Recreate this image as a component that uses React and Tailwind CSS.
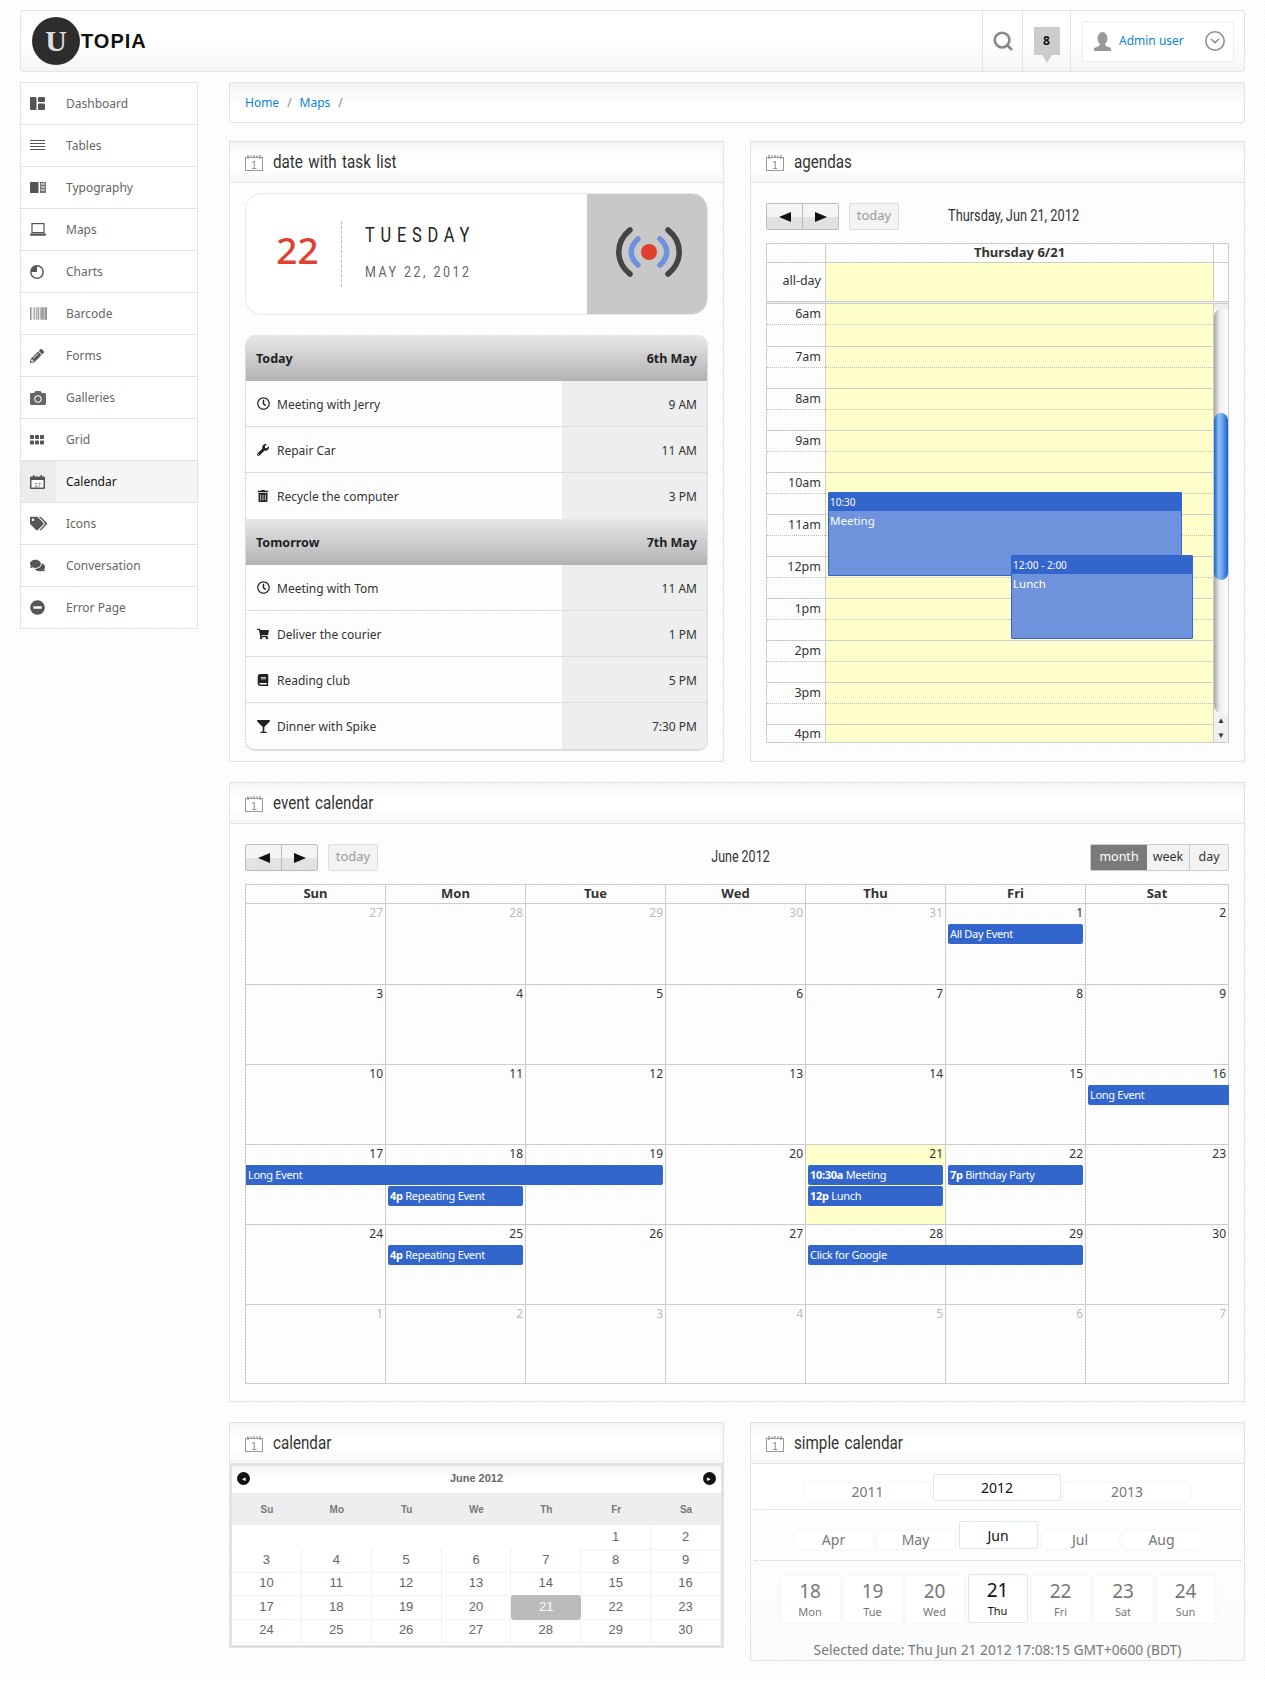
import React from 'react';
import { FaBarcode, FaPencilAlt, FaCamera, FaTags, FaComments, FaMinusCircle, FaRegClock, FaWrench, FaTrashAlt, FaShoppingCart, FaBook, FaGlassMartini } from 'react-icons/fa';
import { Search, CircleChevronDown } from 'lucide-react';

const DashIcon = () => (<svg width="15" height="13" viewBox="0 0 15 13" fill="#555"><rect x="0" y="0" width="6.5" height="13" rx="1"/><rect x="8" y="0" width="7" height="5" rx="1"/><rect x="8" y="6.5" width="7" height="6.5" rx="1"/></svg>);
const LinesIcon = () => (<svg width="15" height="11" viewBox="0 0 15 11" stroke="#555" strokeWidth="1"><path d="M0 .5h15M0 3.5h15M0 6.5h15M0 9.5h15"/></svg>);
const TypoIcon = () => (<svg width="16" height="11" viewBox="0 0 16 11" fill="#555"><rect x="0" y="0" width="8.5" height="11"/><path d="M10 0h6v11h-6z" fill="#777"/><path d="M11 2h4M11 5h4M11 8h4" stroke="#fff" strokeWidth="1"/></svg>);
const LaptopIcon = () => (<svg width="16" height="13" viewBox="0 0 16 13"><rect x="2" y=".6" width="12" height="9" fill="none" stroke="#555" strokeWidth="1.2"/><path d="M0 10.5h16v1.2a1 1 0 0 1-1 1H1a1 1 0 0 1-1-1z" fill="#555"/></svg>);
const PieIcon = () => (<svg width="14" height="14" viewBox="0 0 14 14"><circle cx="7" cy="7" r="6.2" fill="none" stroke="#555" strokeWidth="1.4"/><path d="M7 7V.8A6.2 6.2 0 0 0 .8 7z" fill="#555"/></svg>);
const GridIcon = () => (<svg width="14" height="10" viewBox="0 0 14 10" fill="#555"><rect x="0" y="0" width="4" height="4" rx=".8"/><rect x="5" y="0" width="4" height="4" rx=".8"/><rect x="10" y="0" width="4" height="4" rx=".8"/><rect x="0" y="5.5" width="4" height="4" rx=".8"/><rect x="5" y="5.5" width="4" height="4" rx=".8"/><rect x="10" y="5.5" width="4" height="4" rx=".8"/></svg>);
const CalIcon17 = () => (<svg width="15" height="14" viewBox="0 0 15 14"><rect x="0" y="1.5" width="15" height="12.5" rx="1" fill="#555"/><rect x="1.5" y="5" width="12" height="7.5" fill="#fff"/><rect x="3" y="0" width="1.5" height="3" fill="#555"/><rect x="10.5" y="0" width="1.5" height="3" fill="#555"/><text x="7.5" y="11.5" fontSize="6" textAnchor="middle" fill="#555" fontFamily="Liberation Sans">17</text></svg>);
const UserIcon = () => (<svg width="19" height="19" viewBox="0 0 19 19" fill="#999"><ellipse cx="9.5" cy="6.5" rx="5" ry="6.5"/><path d="M7 12h5l1 2 5 2v3H1v-3l5-2z"/></svg>);

const nav = [
  ['Dashboard', <DashIcon />], ['Tables', <LinesIcon />], ['Typography', <TypoIcon />],
  ['Maps', <LaptopIcon />], ['Charts', <PieIcon />], ['Barcode', <FaBarcode size={17} color="#666" />],
  ['Forms', <FaPencilAlt size={14} color="#555" />], ['Galleries', <FaCamera size={16} color="#666" />], ['Grid', <GridIcon />],
  ['Calendar', <CalIcon17 />, true], ['Icons', <FaTags size={17} color="#555" />], ['Conversation', <FaComments size={15} color="#555" />], ['Error Page', <FaMinusCircle size={15} color="#555" />],
];

const WidgetIcon = () => (
  <svg width="18" height="17" viewBox="0 0 18 17" className="shrink-0">
    <rect x="0.5" y="3.5" width="17" height="13" fill="#fff" stroke="#999" />
    <path d="M3 1v4M6 1.5v2M9 1v2.5M12 1.5v2M15 1v4" stroke="#999" strokeWidth="1.4" />
    <text x="9" y="15" fontSize="10" textAnchor="middle" fill="#888" fontFamily="Liberation Sans">1</text>
  </svg>
);

const Widget = ({ title, className = '', children }) => (
  <section className={`border border-[#e2e2e2] ${className}`}>
    <div className="flex h-[41px] items-center gap-[10px] border-b border-[#e2e2e2] bg-[linear-gradient(180deg,#f4f4f4,#ffffff_35%,#ffffff_65%,#f6f6f6)] pl-[15px]">
      <WidgetIcon />
      <h2 className="-mt-[2px] inline-block origin-left scale-x-[0.8] whitespace-nowrap font-['Roboto',sans-serif] text-[19px] leading-none text-[#333] [word-spacing:2px]">{title}</h2>
    </div>
    {children}
  </section>
);

const tasks = [
  { head: ['Today', '6th May'], rows: [[<FaRegClock size={13} />, 'Meeting with Jerry', '9 AM'], [<FaWrench size={12} />, 'Repair Car', '11 AM'], [<FaTrashAlt size={12} />, 'Recycle the computer', '3 PM']] },
  { head: ['Tomorrow', '7th May'], rows: [[<FaRegClock size={13} />, 'Meeting with Tom', '11 AM'], [<FaShoppingCart size={12} />, 'Deliver the courier', '1 PM'], [<FaBook size={12} />, 'Reading club', '5 PM'], [<FaGlassMartini size={13} />, 'Dinner with Spike', '7:30 PM']] },
];

const Triangle = ({ dir }) => (
  <svg width="12" height="10" viewBox="0 0 12 10" fill="#111">{dir === 'l' ? <path d="M0 5 12 0v10z" /> : <path d="M12 5 0 0v10z" />}</svg>
);

const NavButtons = () => (
  <div className="flex items-center">
    <div className="flex h-[27px] w-[73px] overflow-hidden rounded-[2px] border border-[#bbb] bg-[linear-gradient(180deg,#f5f5f5_50%,#e2e2e2_50%)]">
      <div className="flex flex-1 items-center justify-center border-r border-[#bbb]"><Triangle dir="l" /></div>
      <div className="flex flex-1 items-center justify-center"><Triangle dir="r" /></div>
    </div>
    <div className="ml-[10px] flex h-[27px] w-[50px] items-center justify-center rounded-[2px] border border-[#ddd] bg-[#f3f3f3] pb-[2px] text-[13px] text-[#999]">today</div>
  </div>
);

const hours = ['6am', '7am', '8am', '9am', '10am', '11am', '12pm', '1pm', '2pm', '3pm'];

const Agenda = () => (
  <div className="px-[15px] pb-[15px] pt-[20px]">
    <div className="relative flex items-center">
      <NavButtons />
      <div className="-mt-[2px] ml-[49px] inline-block origin-left scale-x-[0.8] whitespace-nowrap font-['Roboto',sans-serif] text-[16px] text-[#333]">Thursday, Jun 21, 2012</div>
    </div>
    <div className="mt-[13px] border border-[#ccc] text-[#333]">
      <div className="grid h-[19px] grid-cols-[58px_1fr_14px] border-b border-[#ccc]">
        <div />
        <div className="border-l border-r border-[#ccc] text-center text-[13px] font-bold leading-[17px]">Thursday 6/21</div>
        <div />
      </div>
      <div className="grid h-[38px] grid-cols-[58px_1fr_14px]">
        <div className="pr-[4px] text-right text-[12.5px] leading-[36px]">all-day</div>
        <div className="border-l border-r border-[#ccc] bg-[#ffffcc]" />
        <div />
      </div>
      <div className="h-[3px] border-b border-t border-[#ccc] bg-[#eee]" />
      <div className="relative flex h-[438px] overflow-hidden">
        <div className="flex-1">
          {hours.map((h, i) => (
            <div key={h} className={`grid h-[42px] grid-cols-[58px_1fr] ${i ? 'border-t border-[#ccc]' : ''}`}>
              <div className="flex flex-col">
                <div className="h-[21px] border-b border-dotted border-[#bbb] pr-[4px] text-right text-[12.5px] leading-[19px]">{h}</div>
              </div>
              <div className="border-l border-r border-[#ccc] bg-[#ffffcc]">
                <div className="h-[21px] border-b border-dotted border-[#bbb]" />
              </div>
            </div>
          ))}
          <div className="grid h-[18px] grid-cols-[58px_1fr] border-t border-[#ccc]">
            <div className="pr-[4px] text-right text-[12.5px] leading-[17px]">4pm</div>
            <div className="border-l border-r border-[#ccc] bg-[#ffffcc]" />
          </div>
        </div>
        <div className="relative flex w-[14px] flex-col">
          <div className="h-[5px] bg-[#eee]" />
          <div className="flex-1 rounded-[7px] bg-[linear-gradient(90deg,#a8a8a8,#eeeeee_40%,#ffffff)]" />
          <div className="flex h-[29px] flex-col items-center justify-around bg-[#f0f0f0] text-[8px] leading-none text-[#333]">
            <span>▲</span><span>▼</span>
          </div>
          <div className="absolute left-0 top-[109px] h-[167px] w-[14px] rounded-[7px] bg-[linear-gradient(90deg,#1f5ec8,#8fc0f5_35%,#5b9bea_65%,#1f5ec8)]" />
        </div>
        <div className="absolute left-[61px] top-[188px] h-[84px] w-[354px] rounded-[1px] border border-[#3366cc] bg-[#6e92db] text-[11.5px] text-white">
          <div className="h-[18px] bg-[#3366cc] pl-[1px] text-[10px] leading-[18px]">10:30</div>
          <div className="pl-[1px] leading-[19px]">Meeting</div>
        </div>
        <div className="absolute left-[244px] top-[251px] h-[84px] w-[182px] rounded-[1px] border border-[#3366cc] bg-[#6e92db] text-[11.5px] text-white">
          <div className="h-[18px] bg-[#3366cc] pl-[1px] text-[10px] leading-[18px]">12:00 - 2:00</div>
          <div className="pl-[1px] leading-[19px]">Lunch</div>
        </div>
      </div>
    </div>
  </div>
);

const weeks = [
  [[27, 1], [28, 1], [29, 1], [30, 1], [31, 1], [1], [2]],
  [[3], [4], [5], [6], [7], [8], [9]],
  [[10], [11], [12], [13], [14], [15], [16]],
  [[17], [18], [19], [20], [21, 0, 1], [22], [23]],
  [[24], [25], [26], [27], [28], [29], [30]],
  [[1, 1], [2, 1], [3, 1], [4, 1], [5, 1], [6, 1], [7, 1]],
];

const weekHeights = ['h-[81px]', 'h-[80px]', 'h-[80px]', 'h-[80px]', 'h-[80px]', 'h-[78px]'];

const Ev = ({ className, t, children }) => (
  <div className={`absolute h-[20px] rounded-[2px] bg-[#3366cc] pl-[2px] text-[11px] leading-[19px] tracking-[-0.3px] text-white ${className}`}>
    {t && <b>{t} </b>}{children}
  </div>
);

const weekEvents = [
  <Ev key="a" className="left-[702px] top-[20px] w-[135px]">All Day Event</Ev>,
  null,
  <Ev key="b" className="left-[842px] top-[20px] w-[141px] rounded-r-none">Long Event</Ev>,
  <React.Fragment key="c">
    <Ev className="left-0 top-[20px] w-[417px] rounded-l-none">Long Event</Ev>
    <Ev className="left-[142px] top-[41px] w-[135px]" t="4p">Repeating Event</Ev>
    <Ev className="left-[562px] top-[20px] w-[135px]" t="10:30a">Meeting</Ev>
    <Ev className="left-[562px] top-[41px] w-[135px]" t="12p">Lunch</Ev>
    <Ev className="left-[702px] top-[20px] w-[135px]" t="7p">Birthday Party</Ev>
  </React.Fragment>,
  <React.Fragment key="d">
    <Ev className="left-[142px] top-[20px] w-[135px]" t="4p">Repeating Event</Ev>
    <Ev className="left-[562px] top-[20px] w-[275px]">Click for Google</Ev>
  </React.Fragment>,
  null,
];

const MonthCal = () => (
  <div className="px-[15px] pb-[17px] pt-[20px]">
    <div className="relative flex items-center justify-between">
      <NavButtons />
      <div className="-mt-[2px] ml-[12px] inline-block scale-x-[0.78] whitespace-nowrap font-['Roboto',sans-serif] text-[16px] text-[#333]">June 2012</div>
      <div className="flex h-[27px] overflow-hidden rounded-[2px] border border-[#ccc] text-[12.5px]">
        <div className="flex w-[56px] items-center justify-center bg-[#7a7a7a] text-white">month</div>
        <div className="flex w-[43px] items-center justify-center border-r border-[#ccc] bg-[#f3f3f3] text-[#333]">week</div>
        <div className="flex w-[38px] items-center justify-center bg-[#f3f3f3] text-[#333]">day</div>
      </div>
    </div>
    <div className="mt-[13px] border border-[#ccc] text-[#333]">
      <div className="grid h-[19px] grid-cols-[140px_140px_140px_140px_140px_140px_1fr] border-b border-[#ccc] text-center text-[13px] font-bold leading-[17px]">
        {['Sun', 'Mon', 'Tue', 'Wed', 'Thu', 'Fri', 'Sat'].map((d, i) => (
          <div key={d} className={i < 6 ? 'border-r border-[#ccc]' : ''}>{d}</div>
        ))}
      </div>
      {weeks.map((w, wi) => (
        <div key={wi} className={`relative grid grid-cols-[140px_140px_140px_140px_140px_140px_1fr] ${weekHeights[wi]} ${wi < 5 ? 'border-b border-[#ccc]' : ''}`}>
          {w.map(([n, other, today], i) => (
            <div key={i} className={`pr-[2px] text-right text-[12px] leading-[18px] ${i < 6 ? 'border-r border-[#ccc]' : ''} ${other ? 'text-[#bbb]' : ''} ${today ? 'bg-[#ffffcc]' : ''}`}>{n}</div>
          ))}
          {weekEvents[wi]}
        </div>
      ))}
    </div>
  </div>
);

const dpRows = [
  ['', '', '', '', '', 1, 2], [3, 4, 5, 6, 7, 8, 9], [10, 11, 12, 13, 14, 15, 16], [17, 18, 19, 20, 21, 22, 23], [24, 25, 26, 27, 28, 29, 30],
];
const dpHeights = ['h-[23px]', 'h-[23px]', 'h-[24px]', 'h-[23px]', 'h-[23px]'];

const DatePicker = () => (
  <div className="border-2 border-[#e2e2e2] bg-white pb-[4px] font-['Liberation_Sans',sans-serif] text-[#666]">
    <div className="flex h-[27px] items-center justify-between bg-[linear-gradient(180deg,#f6f6f6,#ffffff_50%)] px-[5px] pb-[3px]">
      <span className="flex h-[13px] w-[13px] items-center justify-center rounded-full bg-[#111] text-[7px] leading-none text-white">◂</span>
      <span className="text-[11px] font-bold">June 2012</span>
      <span className="flex h-[13px] w-[13px] items-center justify-center rounded-full bg-[#111] text-[7px] leading-none text-white">▸</span>
    </div>
    <div className="grid h-[32px] grid-cols-7 items-center bg-[#eeeeee] text-center text-[10px] font-bold text-[#777]">
      {['Su', 'Mo', 'Tu', 'We', 'Th', 'Fr', 'Sa'].map(d => <div key={d}>{d}</div>)}
    </div>
    {dpRows.map((r, ri) => (
      <div key={ri} className={`grid grid-cols-7 text-center text-[13px] leading-[24px] ${dpHeights[ri]}`}>
        {r.map((n, i) => (
          <div key={i} className={n === '' ? '' : n === 21 ? 'rounded-[3px] bg-[#bbbbbb] text-white' : 'border-b border-r border-[#f1f1f1]'}>{n}</div>
        ))}
      </div>
    ))}
  </div>
);

const Pill = ({ active, className = '', children }) => (
  <div className={`flex items-center justify-center bg-white ${active ? 'border border-[#dde6f0] text-[#111]' : 'text-[#777] shadow-[0_0_3px_#eeeeee]'} ${className}`}>{children}</div>
);

const days = [[18, 'Mon', 'w-[59px]'], [19, 'Tue', 'w-[58px]'], [20, 'Wed', 'w-[58px]'], [21, 'Thu', 'w-[60px]', 1], [22, 'Fri', 'w-[58px]'], [23, 'Sat', 'w-[59px]'], [24, 'Sun', 'w-[58px]']];

const SimpleCal = () => (
  <div className="bg-[linear-gradient(180deg,#ffffff,#fafbfc)] text-center">
    <div className="mx-[3px] flex h-[46px] items-start justify-center gap-[3px] border-b border-dotted border-[#cccccc] pt-[10px] text-[14px]">
      <Pill className="mt-[9px] h-[18px] w-[125px] pb-[2px]">2011</Pill>
      <Pill active className="h-[27px] w-[128px] rounded-[2px]">2012</Pill>
      <Pill className="mt-[9px] h-[18px] w-[126px] pb-[2px]">2013</Pill>
    </div>
    <div className="mx-[3px] flex h-[51px] items-start justify-center gap-[4px] border-b border-dotted border-[#cccccc] pt-[11px] text-[14px]">
      <Pill className="mt-[10px] h-[18px] w-[78px] pb-[2px]">Apr</Pill>
      <Pill className="mt-[10px] h-[18px] w-[78px] pb-[2px]">May</Pill>
      <Pill active className="h-[28px] w-[79px] rounded-[2px]">Jun</Pill>
      <Pill className="mt-[10px] h-[18px] w-[77px] pb-[2px]">Jul</Pill>
      <Pill className="mt-[10px] h-[18px] w-[78px] pb-[2px]">Aug</Pill>
    </div>
    <div className="flex h-[79px] items-start justify-center gap-[4px] pt-[15px]">
      {days.map(([n, d, w, a]) => (
        <Pill key={n} active={a} className={`${w} ${a ? '-mt-[2px] h-[49px] rounded-[2px]' : 'h-[47px]'} flex-col`}>
          <span className="text-[19px] leading-[23px]">{n}</span>
          <span className="text-[11px] leading-[17px]">{d}</span>
        </Pill>
      ))}
    </div>
    <div className="h-[20px] text-[13.8px] leading-[20px] text-[#777]">Selected date: Thu Jun 21 2012 17:08:15 GMT+0600 (BDT)</div>
  </div>
);

export default function App() {
  return (
    <div className="min-h-[1681px] bg-white bg-[radial-gradient(#f3f3f3_0.7px,transparent_0.7px)] bg-[length:3px_3px] px-[20px] pt-[10px] font-['Noto_Sans',sans-serif] text-[#333]">
      <header className="flex h-[62px] items-stretch justify-between rounded-[3px] border border-[#e2e2e2] bg-[linear-gradient(180deg,#ffffff_50%,#f5f5f5)]">
        <div className="flex items-center pl-[11px]">
          <div className="flex h-[48px] w-[48px] items-center justify-center rounded-full bg-[#2d2d2d] font-['Liberation_Serif',serif] text-[30px] font-bold leading-none text-[#dddddd]">U</div>
          <span className="ml-[1px] font-['Liberation_Sans',sans-serif] text-[20px] font-bold tracking-[1px] text-[#111]">TOPIA</span>
        </div>
        <div className="flex">
          <div className="flex w-[40px] items-center justify-center border-l border-[#e2e2e2]"><Search size={22} color="#888" strokeWidth={2.8} /></div>
          <div className="flex w-[48px] items-center justify-center border-l border-[#e2e2e2]">
            <div className="relative flex h-[28px] w-[26px] items-center justify-center bg-[#cccccc] text-[12px] font-bold text-[#111]">8
              <span className="absolute -bottom-[8px] left-[8px] h-0 w-0 border-l-[5px] border-r-[5px] border-t-[8px] border-l-transparent border-r-transparent border-t-[#cccccc]" />
            </div>
          </div>
          <div className="flex w-[174px] items-center border-l border-[#e2e2e2] pl-[11px]">
            <div className="flex h-[41px] w-[152px] items-center rounded-[2px] border border-[#eeeeee] bg-white pl-[10px]">
              <UserIcon />
              <span className="ml-[7px] text-[12px] text-[#0a84d6]">Admin user</span>
              <CircleChevronDown size={22} color="#888" strokeWidth={1.6} className="ml-[20px]" />
            </div>
          </div>
        </div>
      </header>
      <div className="mt-[10px] flex gap-[31px]">
        <nav className="w-[178px] self-start border border-b-0 border-[#e2e2e2] bg-white">
          {nav.map(([label, icon, active]) => (
            <div key={label} className={`flex h-[42px] items-center border-b border-[#e2e2e2] ${active ? 'bg-[#f5f5f5]' : ''}`}>
              <div className={`flex h-full w-[35px] items-center pl-[9px] ${active ? 'bg-[#ececec]' : ''}`}>{icon}</div>
              <span className={`ml-[10px] text-[12px] ${active ? 'text-[#111]' : 'text-[#666]'}`}>{label}</span>
            </div>
          ))}
        </nav>
        <main className="w-[1016px]">
          <div className="flex h-[41px] items-center gap-[8px] rounded-[3px] border border-[#e2e2e2] bg-[linear-gradient(180deg,#f4f4f4,#ffffff_60%)] pl-[15px] text-[12px] text-[#888]">
            <span className="text-[#0a84d6]">Home</span><span>/</span><span className="text-[#0a84d6]">Maps</span><span>/</span>
          </div>
          <div className="mt-[18px] grid grid-cols-[495px_495px] gap-[26px]">
            <Widget title="date with task list">
              <div className="px-[15px] pb-[10px] pt-[10px]">
                <div className="flex h-[122px] overflow-hidden rounded-[16px] border border-[#e8e8e8] bg-white">
                  <div className="flex w-[95px] items-center justify-center pb-[9px] pl-[8px] text-[37px] font-medium leading-none text-[#e04030]">22</div>
                  <div className="my-[27px] border-l border-dashed border-[#bbb]" />
                  <div className="flex-1 pl-[23px] pt-[29px]">
                    <div className="origin-left scale-x-[0.82] whitespace-nowrap font-['Roboto',sans-serif] text-[20px] leading-[24px] tracking-[7px] text-[#222]">TUESDAY</div>
                    <div className="mt-[15px] origin-left scale-x-[0.83] whitespace-nowrap font-['Roboto',sans-serif] text-[15px] leading-[20px] tracking-[3px] text-[#666]">MAY 22, 2012</div>
                  </div>
                  <div className="flex w-[120px] items-center justify-center bg-[#c8c8c8] pb-[5px] pl-[3px]">
                    <svg width="66" height="50" viewBox="0 0 66 50" fill="none" strokeLinecap="round">
                      <path d="M14 3C-1 15-1 35 14 47M52 3C67 15 67 35 52 47" stroke="#444" strokeWidth="5.5" />
                      <path d="M22 12C13 20 13 30 22 38M44 12C53 20 53 30 44 38" stroke="#6e92db" strokeWidth="5.5" />
                      <circle cx="33" cy="25" r="8" fill="#e04030" />
                    </svg>
                  </div>
                </div>
                <div className="mt-[20px] overflow-hidden rounded-[10px] border-b-2 border-l border-r border-[#dddddd]">
                  {tasks.map(g => (
                    <div key={g.head[0]}>
                      <div className="flex h-[46px] items-center justify-between bg-[linear-gradient(180deg,#e8e8e8,#b2b2b2)] px-[10px] pt-[3px] text-[12.5px] font-bold text-[#222]">
                        <span>{g.head[0]}</span><span>{g.head[1]}</span>
                      </div>
                      {g.rows.map(([icon, text, time], i) => (
                        <div key={text} className={`flex h-[46px] items-stretch text-[12px] ${i < g.rows.length - 1 ? 'border-b border-[#dddddd]' : ''}`}>
                          <div className="flex w-[316px] items-center pl-[11px] pt-[2px] text-[#333]"><span className="-mt-[2px] flex w-[20px] text-[#222]">{icon}</span>{text}</div>
                          <div className="flex flex-1 items-center justify-end bg-[#eeeeee] pr-[10px] pt-[2px]">{time}</div>
                        </div>
                      ))}
                    </div>
                  ))}
                </div>
              </div>
            </Widget>
            <Widget title="agendas"><Agenda /></Widget>
          </div>
          <Widget title="event calendar" className="mt-[20px]"><MonthCal /></Widget>
          <div className="mt-[20px] grid grid-cols-[495px_495px] items-start gap-[26px]">
            <Widget title="calendar"><DatePicker /></Widget>
            <Widget title="simple calendar"><SimpleCal /></Widget>
          </div>
        </main>
      </div>
    </div>
  );
}
